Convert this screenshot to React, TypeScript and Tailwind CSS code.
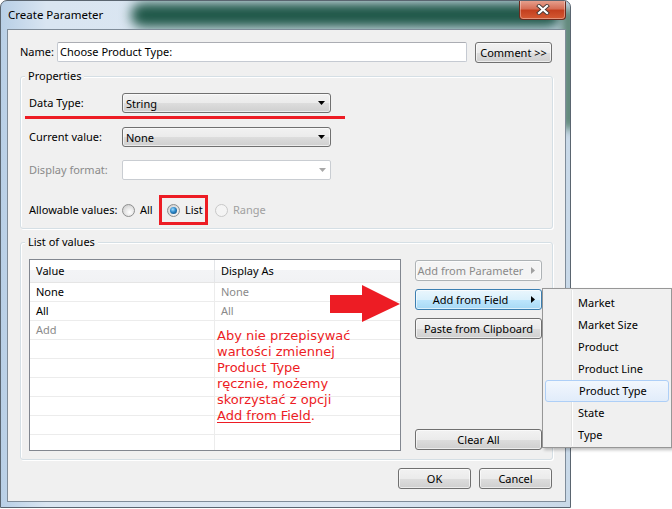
import React from "react";

type Variant = "normal" | "focus" | "disabled";

const ui = "font-['Noto_Sans',sans-serif] text-[11px]";

const btnStyles: Record<Variant, string> = {
  normal:
    "border-[#707070] bg-[linear-gradient(#f2f2f2_0%,#ebebeb_50%,#dddddd_51%,#cfcfcf_100%)] text-black",
  focus:
    "border-[#3c7fb1] bg-[linear-gradient(#eaf6fd_0%,#d9f0fc_50%,#bee6fd_51%,#a7d9f5_100%)] text-black",
  disabled: "border-[#adb2b5] bg-[#f4f4f4] text-[#8a8a8a]",
};

function Arrow({ color }: { color: string }) {
  return (
    <svg width="4" height="7" viewBox="0 0 4 7">
      <polygon points="0,0 4,3.5 0,7" fill={color} />
    </svg>
  );
}

function Caret({ color }: { color: string }) {
  return (
    <svg width="7" height="4" viewBox="0 0 7 4">
      <polygon points="0,0 7,0 3.5,4" fill={color} />
    </svg>
  );
}

function Button({
  label,
  variant = "normal",
  arrow = false,
  className = "",
}: {
  label: string;
  variant?: Variant;
  arrow?: boolean;
  className?: string;
}) {
  return (
    <div
      className={`flex h-[21px] items-center rounded-[3px] border shadow-[inset_0_0_0_1px_rgba(255,255,255,0.6)] ${btnStyles[variant]} ${className}`}
    >
      <span className="flex-1 text-center leading-none">{label}</span>
      {arrow ? (
        <span className="flex w-[16px] justify-center">
          <Arrow color={variant === "disabled" ? "#a0a0a0" : "#000"} />
        </span>
      ) : null}
    </div>
  );
}

function Combo({ value, disabled = false }: { value?: string; disabled?: boolean }) {
  if (disabled) {
    return (
      <div className="flex h-[20px] w-[209px] items-center justify-end rounded-[2px] border border-[#c9cdd2] bg-white pr-[4px]">
        <Caret color="#a8a8a8" />
      </div>
    );
  }
  return (
    <div className="flex h-[20px] w-[209px] items-center rounded-[3px] border border-[#707070] bg-[linear-gradient(#f2f2f2_0%,#ebebeb_50%,#dddddd_51%,#cfcfcf_100%)] pl-[3px] pr-[5px] shadow-[inset_0_0_0_1px_rgba(255,255,255,0.6)]">
      <span className="flex-1 leading-none">{value}</span>
      <Caret color="#000" />
    </div>
  );
}

function Radio({ checked = false, disabled = false }: { checked?: boolean; disabled?: boolean }) {
  return (
    <span
      className={`flex h-[13px] w-[13px] shrink-0 items-center justify-center rounded-full border ${
        disabled
          ? "border-[#c8c8c8] bg-[#f4f4f4]"
          : "border-[#8e8f8f] bg-[radial-gradient(circle_at_60%_65%,#ffffff_0%,#e6e6e6_45%,#c4c4c4_100%)]"
      }`}
    >
      {checked ? (
        <span className="h-[7px] w-[7px] rounded-full bg-[radial-gradient(circle_at_40%_35%,#9edcff_0%,#2a86c8_45%,#0d3d66_100%)]" />
      ) : null}
    </span>
  );
}

const rows: [string, string][] = [
  ["None", "None"],
  ["All", "All"],
  ["Add", ""],
  ["", ""],
  ["", ""],
  ["", ""],
  ["", ""],
  ["", ""],
  ["", ""],
];

const menuItems = ["Market", "Market Size", "Product", "Product Line", "Product Type", "State", "Type"];

export default function App() {
  return (
    <div className={`relative h-[509px] w-[672px] overflow-hidden bg-white ${ui}`}>
      {/* window */}
      <div className="relative h-[508px] w-[571px] overflow-hidden rounded-t-[7px] border border-[#5a6570] bg-[linear-gradient(90deg,#b8cfe6_0%,#d9e5f1_8%,#dce7f2_60%,#c9d9e8_100%)]">
        <div className="absolute left-[130px] top-[2px] h-[24px] w-[430px] rounded-full bg-[#1f5748] blur-[6px]" />
        <div className="absolute right-[-6px] top-[8px] h-[120px] w-[14px] bg-[#56806f] blur-[5px]" />

        <div className="relative flex h-[28px] items-center pl-[7px]">
          <span className="text-[11.5px] text-black">Create Parameter</span>
          <div className="-mt-[1px] ml-auto mr-[4px] flex h-[20px] w-[47px] items-center justify-center self-start rounded-b-[4px] border border-t-0 border-[#6b2a1e] bg-[linear-gradient(#e8a593_0%,#d66f57_45%,#c4401f_55%,#d45a33_100%)] shadow-[inset_0_0_0_1px_rgba(255,255,255,0.35)]">
            <svg width="14" height="11" viewBox="0 0 14 11">
              <path d="M3 2 L11 9 M11 2 L3 9" stroke="#4a3a36" strokeWidth="4" strokeLinecap="square" />
              <path d="M3 2 L11 9 M11 2 L3 9" stroke="#ffffff" strokeWidth="2.2" strokeLinecap="square" />
            </svg>
          </div>
        </div>

        {/* client area */}
        <div className="relative ml-[6px] h-[473px] w-[559px] border border-[#7f8c99] bg-[#f0f0f0] px-[12px] pt-[12px]">
          {/* name row */}
          <div className="flex h-[20px] items-center">
            <span className="w-[37px]">Name:</span>
            <div className="flex h-[20px] w-[410px] items-center rounded-[2px] border border-[#c5cad2] border-t-[#abadb3] bg-white pl-[2px]">
              Choose Product Type:
            </div>
            <Button label="Comment >>" className="ml-[8px] h-[21px] w-[77px]" />
          </div>

          {/* properties */}
          <div className="relative mt-[14px] h-[153px] rounded-[3px] border border-[#d5dfe5] pl-[8px] pt-[16px] shadow-[inset_1px_1px_0_#ffffff,1px_1px_0_#ffffff]">
            <span className="absolute left-[4px] top-[-9px] bg-[#f0f0f0] px-[3px] leading-[16px]">Properties</span>
            <div className="flex h-[20px] items-center">
              <span className="w-[93px]">Data Type:</span>
              <Combo value="String" />
            </div>
            <div className="mt-[14px] flex h-[20px] items-center">
              <span className="w-[93px]">Current value:</span>
              <Combo value="None" />
            </div>
            <div className="mt-[13px] flex h-[20px] items-center">
              <span className="w-[93px] text-[#8a8a8a]">Display format:</span>
              <Combo disabled />
            </div>
            <div className="mt-[20px] flex h-[20px] items-center">
              <span className="w-[93px]">Allowable values:</span>
              <div className="flex w-[45px] items-center gap-[5px]">
                <Radio />
                <span>All</span>
              </div>
              <div className="flex w-[48px] items-center gap-[5px]">
                <Radio checked />
                <span>List</span>
              </div>
              <div className="flex items-center gap-[5px] text-[#a0a0a0]">
                <Radio disabled />
                <span>Range</span>
              </div>
            </div>
          </div>

          {/* list of values */}
          <div className="relative mt-[13px] flex h-[218px] rounded-[3px] border border-[#d5dfe5] pb-[8px] pl-[8px] pr-[10px] pt-[16px] shadow-[inset_1px_1px_0_#ffffff,1px_1px_0_#ffffff]">
            <span className="absolute left-[4px] top-[-9px] bg-[#f0f0f0] px-[3px] leading-[16px]">List of values</span>
            <div className="h-[192px] w-[372px] overflow-hidden border border-[#828790] bg-white">
              <div className="flex h-[23px] border-b border-[#e5e5e5] bg-[linear-gradient(#ffffff_0%,#ffffff_45%,#f3f4f6_46%,#f1f2f4_100%)]">
                <div className="flex w-[185px] items-center border-r border-[#e3e5e8] pl-[6px]">Value</div>
                <div className="flex flex-1 items-center pl-[6px]">Display As</div>
              </div>
              {rows.map(([v, d], i) => (
                <div key={i} className="flex h-[19px] border-b border-[#ececec]">
                  <div
                    className={`flex w-[185px] items-center border-r border-[#ececec] pl-[6px] ${
                      v === "Add" ? "text-[#8a8a8a]" : "text-black"
                    }`}
                  >
                    {v}
                  </div>
                  <div className="flex flex-1 items-center pl-[6px] text-[#8a8a8a]">{d}</div>
                </div>
              ))}
            </div>
            <div className="ml-[14px] flex w-[127px] flex-col pt-[1px] pb-[1px]">
              <Button label="Add from Parameter" variant="disabled" arrow />
              <Button label="Add from Field" variant="focus" arrow className="mt-[8px]" />
              <Button label="Paste from Clipboard" className="mt-[8px]" />
              <Button label="Clear All" className="mt-auto" />
            </div>
          </div>

          {/* ok / cancel */}
          <div className="mt-[8px] flex justify-end gap-[8px] pr-[1px]">
            <Button label="OK" className="w-[73px]" />
            <Button label="Cancel" className="w-[73px]" />
          </div>
        </div>
      </div>

      {/* annotations */}
      <div className="absolute left-[25px] top-[116px] h-[3px] w-[320px] bg-[#ed1c24]" />
      <div className="absolute left-[159px] top-[195px] h-[30px] w-[49px] border-[3px] border-[#ed1c24]" />
      <svg className="absolute left-[330px] top-[285px]" width="71" height="38" viewBox="0 0 71 38">
        <polygon points="0,10 32,10 32,0 70,19 32,37 32,28 0,28" fill="#ed1c24" />
      </svg>
      <div className="absolute left-[217px] top-[328px] font-['DejaVu_Sans',sans-serif] text-[13px] leading-[16px] text-[#ed1c24]">
        <div>Aby nie przepisywać</div>
        <div>wartości zmiennej</div>
        <div>Product Type</div>
        <div>ręcznie, możemy</div>
        <div>skorzystać z opcji</div>
        <div>
          <span className="underline underline-offset-2">Add from Field</span>.
        </div>
      </div>

      {/* dropdown menu */}
      <div className="absolute left-[542px] top-[288px] h-[160px] w-[130px] border border-[#979797] bg-[#f0f0f0] pb-[1px] pt-[3px] shadow-[2px_2px_3px_rgba(0,0,0,0.25)]">
        <div className="absolute bottom-[1px] left-[28px] top-[1px] w-[2px] border-l border-[#e2e3e3] bg-white" />
        {menuItems.map((item) => (
          <div
            key={item}
            className={`relative mx-[2px] flex h-[22px] items-center pl-[33px] ${
              item === "Product Type"
                ? "rounded-[3px] border border-[#aecff7] bg-[linear-gradient(#f2f7fd,#e1ecfa)] pl-[32px]"
                : ""
            }`}
          >
            {item}
          </div>
        ))}
      </div>
    </div>
  );
}
